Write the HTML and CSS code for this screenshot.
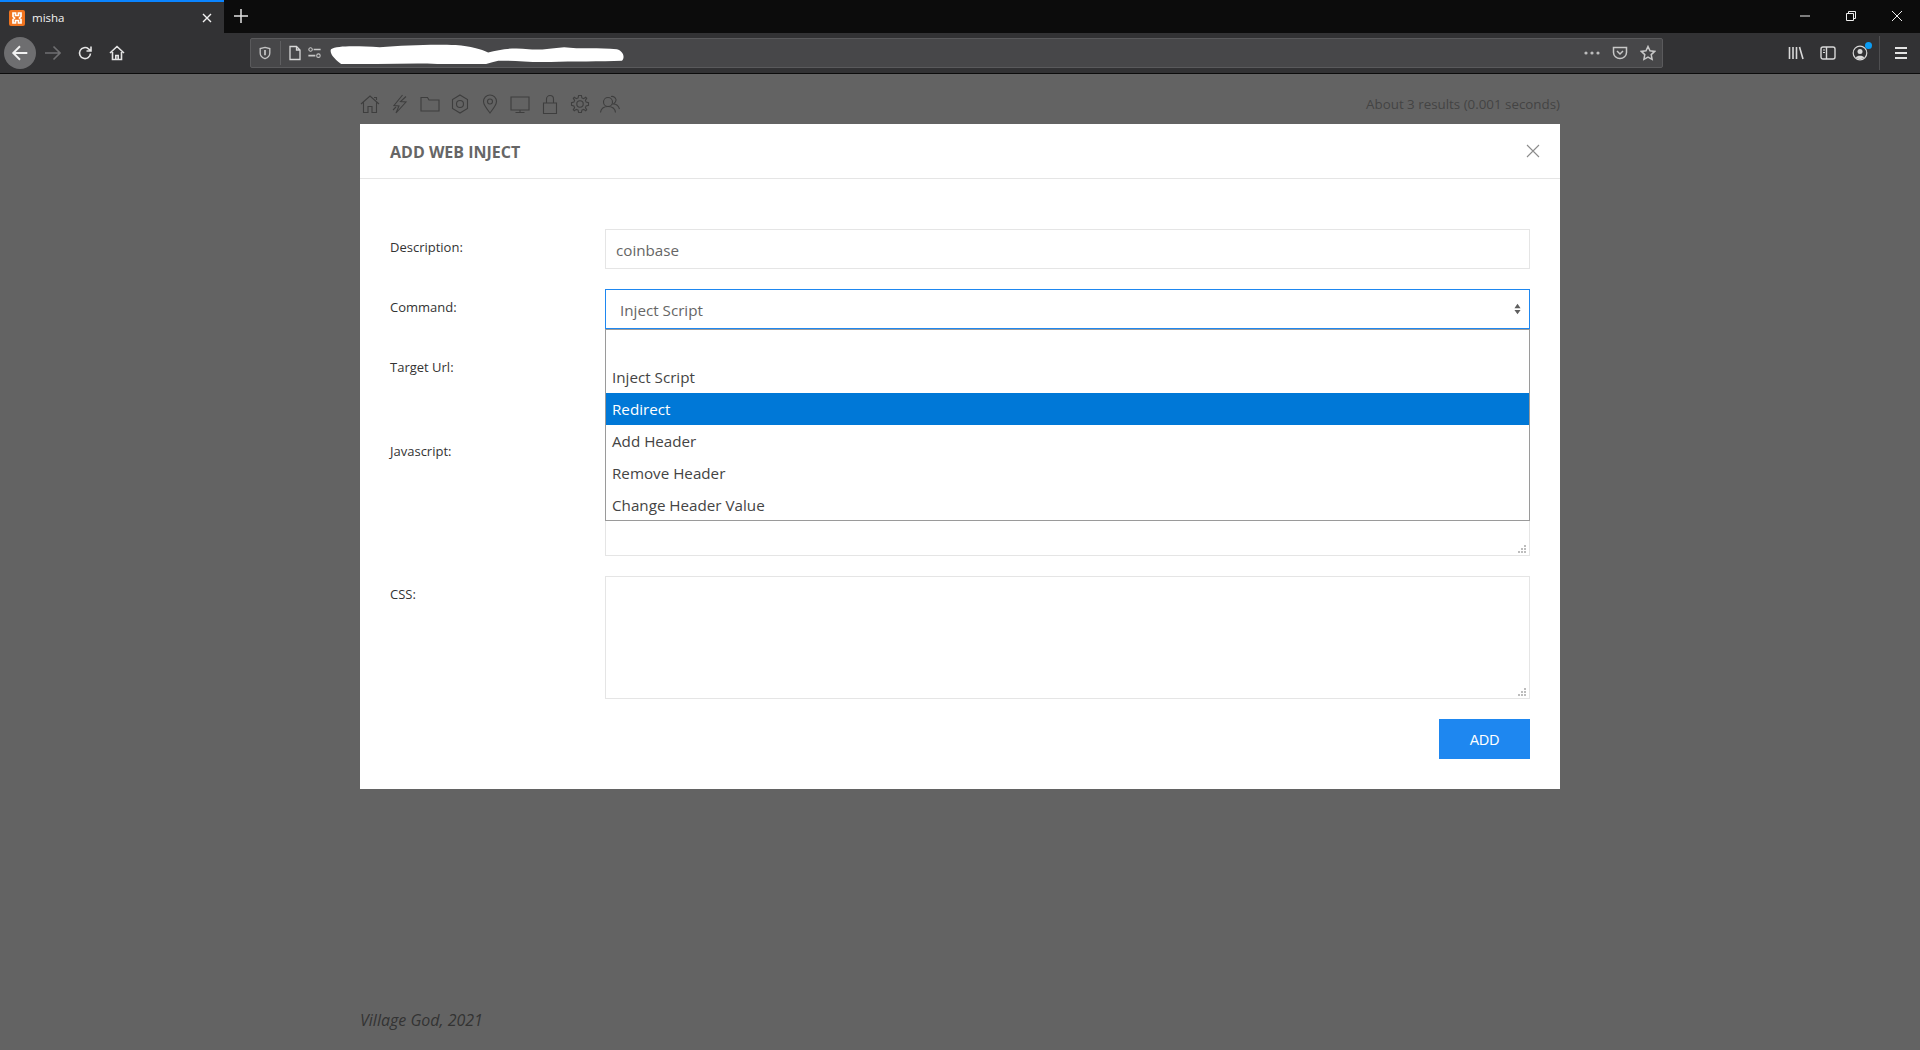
FILE: index.html
```html
<!DOCTYPE html>
<html lang="en">
<head>
<meta charset="utf-8">
<title>misha</title>
<link rel="stylesheet" href="styles.css">
</head>
<body>
<header class="chrome">
  <div class="tabstrip">
    <div class="tab">
      <svg class="favicon" viewBox="0 0 16 16"><rect width="16" height="16" rx="2" fill="#f0741f"/><path d="M4 3h2.500v2.500h3V3H12v3.500L10.500 8 12 9.500V13H9.500v-2.500h-3V13H4V9.500L5.500 8 4 6.500z" fill="none" stroke="#fff" stroke-width="1.700"/></svg>
      <span class="tab-title">misha</span>
      <svg class="tab-close" viewBox="0 0 10 10"><path d="M1 1l8 8M9 1l-8 8" stroke="#f2f2f2" stroke-width="1.400"/></svg>
    </div>
    <svg class="new-tab" viewBox="0 0 14 14"><path d="M7 0v14M0 7h14" stroke="#e2e2e2" stroke-width="1.500"/></svg>
    <div class="window-controls">
      <svg class="win" viewBox="0 0 12 12"><path d="M1 6h10" stroke="#eee" stroke-width="1"/></svg>
      <svg class="win" viewBox="0 0 12 12"><path d="M1.500 3.500h7v7h-7zM3.500 3.500v-2h7v7h-2" fill="none" stroke="#eee"/></svg>
      <svg class="win" viewBox="0 0 12 12"><path d="M1 1l10 10M11 1L1 11" stroke="#eee"/></svg>
    </div>
  </div>
  <div class="toolbar">
    <div class="back"><svg viewBox="0 0 16 16"><path d="M14.500 8H2M8 2L2 8l6 6" fill="none" stroke="#f2f2f2" stroke-width="1.700"/></svg></div>
    <svg class="tool tool-fwd" viewBox="0 0 16 16"><path d="M0 8h15M8.500 1.500L15 8l-6.500 6.500" fill="none" stroke="#6f6f71" stroke-width="1.600"/></svg>
    <svg class="tool" viewBox="0 0 16 16"><path d="M13.500 8.500a5.500 5.500 0 1 1-2-4.700L13.500 5.500M14 1.500v4.500H9.500" fill="none" stroke="#e4e4e4" stroke-width="1.600"/></svg>
    <svg class="tool" viewBox="0 0 16 16"><path d="M1 8l7-6.500L15 8M3.500 7v7.500h9V7M6.800 14.500v-4h2.400v4" fill="none" stroke="#e4e4e4" stroke-width="1.600"/></svg>
    <div class="urlbar">
      <svg class="url-shield" viewBox="0 0 16 16"><path d="M8 1.500l5.500 1.500v5c0 3-2.500 5.500-5.500 6.500-3-1-5.500-3.500-5.500-6.500V3z" fill="none" stroke="#c4c4c4" stroke-width="1.500"/><path d="M8 4.500v6" stroke="#c4c4c4" stroke-width="2"/></svg>
      <span class="url-sep"></span>
      <svg class="url-page" viewBox="0 0 16 16"><path d="M3 1.500h6.500L13 5v9.500H3zM9.500 1.500V5H13" fill="none" stroke="#d8d8d8" stroke-width="1.300"/></svg>
      <svg class="url-perm" viewBox="0 0 16 16"><circle cx="3.500" cy="4" r="2" fill="none" stroke="#c8c8c8" stroke-width="1.200"/><path d="M7 4h8M1 11h8" stroke="#c8c8c8" stroke-width="1.800"/><circle cx="12.500" cy="11" r="2" fill="none" stroke="#c8c8c8" stroke-width="1.200"/></svg>
      <svg class="scribble" viewBox="0 0 294 20" preserveAspectRatio="none"><path d="M2 6C8 2 30 3 50 4c25-2 55-3 75-2 15 1 25 4 32 7 12-3 25-5 40-3 12 1 22-1 35-2 15 2 35 0 52 2 7 2 8 8 5 11-20 1-50 0-70 1-20 1-40-2-52-1-10 2-20 6-32 7-12 0-18-3-28-4-20-1-40 0-60 0-15 0-25 2-35 0C6 16 0 10 2 6z" fill="#fff"/></svg>
      <span class="url-spacer"></span>
      <svg class="url-dots" viewBox="0 0 16 4"><circle cx="2" cy="2" r="1.600" fill="#bdbdbd"/><circle cx="8" cy="2" r="1.600" fill="#bdbdbd"/><circle cx="14" cy="2" r="1.600" fill="#bdbdbd"/></svg>
      <svg class="url-icon" viewBox="0 0 16 16"><path d="M1.500 2.500h13v5c0 3.500-3 6-6.500 6s-6.500-2.500-6.500-6z" fill="none" stroke="#c8c8c8" stroke-width="1.500"/><path d="M5 6l3 3 3-3" fill="none" stroke="#c8c8c8" stroke-width="1.500"/></svg>
      <svg class="url-icon" viewBox="0 0 16 16"><path d="M8 1.500l2 4.300 4.700.6-3.500 3.200.9 4.700L8 12l-4.100 2.300.9-4.700L1.300 6.400 6 5.800z" fill="none" stroke="#c8c8c8" stroke-width="1.500"/></svg>
    </div>
    <div class="tool-right">
      <svg class="tool" viewBox="0 0 16 16"><path d="M1.500 2v12M5 2v12M8.500 2v12M11.500 2l3.500 12" stroke="#d8d8d8" stroke-width="1.600" fill="none"/></svg>
      <svg class="tool" viewBox="0 0 16 16"><rect x="1" y="2" width="14" height="12" rx="2" fill="none" stroke="#d8d8d8" stroke-width="1.400"/><path d="M6.500 2v12" stroke="#d8d8d8" stroke-width="1.400"/><path d="M3 5h2M3 7.500h2" stroke="#d8d8d8"/></svg>
      <span class="account">
        <svg class="tool" viewBox="0 0 16 16"><circle cx="8" cy="8" r="6.800" fill="none" stroke="#d8d8d8" stroke-width="1.200"/><circle cx="8" cy="6.500" r="2.500" fill="#d8d8d8"/><path d="M3.800 12.500c1-2.500 7.400-2.500 8.400 0-2 2-6.400 2-8.400 0z" fill="#d8d8d8"/></svg>
        <span class="account-dot"></span>
      </span>
      <span class="tool-sep"></span>
      <svg class="tool" viewBox="0 0 16 16"><path d="M2 3h12M2 8h12M2 13h12" stroke="#e4e4e4" stroke-width="1.800"/></svg>
    </div>
  </div>
</header>

<main class="page">
  <div class="container">
    <div class="nav-row">
      <nav class="nav-icons">
        <svg viewBox="0 0 20 20"><path d="M1 10l9-8 9 8M3.500 8.500V18.500h4.500v-6h4v6h4.500V8.500M14 3.500h2.500V6" fill="none"/></svg>
        <svg viewBox="0 0 20 20"><path d="M12.500 1L4 11.500l5 .5L6 19l10-11-5.500-.5 5.500-5M3 16l3-3" fill="none"/></svg>
        <svg viewBox="0 0 20 20"><path d="M1 3.500h6.500l1.500 2.500h10v11H1z" fill="none"/></svg>
        <svg viewBox="0 0 20 20"><path d="M10 1l7.500 4.500v9L10 19l-7.500-4.500v-9z" fill="none"/><circle cx="10" cy="10" r="3.500" fill="none"/></svg>
        <svg viewBox="0 0 20 20"><path d="M10 19C6 14 3.500 10.500 3.500 7.500a6.500 6.500 0 0 1 13 0C16.500 10.500 14 14 10 19z" fill="none"/><circle cx="10" cy="7.500" r="2.500" fill="none"/></svg>
        <svg viewBox="0 0 20 20"><path d="M1 3h18v13H1zM10 16v2M5.500 18.500h9" fill="none"/></svg>
        <svg viewBox="0 0 20 20"><path d="M3.500 9h13v10.500h-13zM6.500 9V5a3.500 3.500 0 0 1 7 0v4" fill="none"/></svg>
        <svg viewBox="0 0 20 20"><circle cx="10" cy="10" r="3.200" fill="none"/><polygon points="8.600,1.500 11.400,1.500 11.900,3.900 13.600,4.600 15.700,3.300 16.700,4.300 15.400,6.400 16.100,8.100 18.500,8.600 18.500,11.400 16.100,11.900 15.400,13.600 16.700,15.700 15.700,16.700 13.600,15.400 11.900,16.100 11.400,18.500 8.600,18.500 8.100,16.100 6.400,15.400 4.300,16.700 3.300,15.700 4.600,13.600 3.900,11.900 1.500,11.400 1.500,8.600 3.900,8.100 4.600,6.400 3.300,4.300 4.300,3.300 6.400,4.600 8.100,3.900" fill="none"/></svg>
        <svg viewBox="0 0 20 20"><circle cx="8" cy="8" r="4.500" fill="none"/><path d="M.5 18.500c.5-4 3-6 7.500-6s7 2 7.500 6M11 2.500a4 4 0 0 1 5 3c.3 2-1 3.500-2.500 4.500 2.500 0 5 2 6 5" fill="none"/></svg>
      </nav>
      <span class="results">About 3 results (0.001 seconds)</span>
    </div>
    <footer class="credit">Village God, 2021</footer>
  </div>

  <section class="modal">
    <div class="modal-header">
      <h2 class="modal-title">ADD WEB INJECT</h2>
      <svg class="modal-close" viewBox="0 0 14 14"><path d="M1 1l12 12M13 1L1 13" stroke="#8c8c8c" stroke-width="1.100"/></svg>
    </div>
    <form class="modal-body">
      <div class="field">
        <label class="field-label">Description:</label>
        <input class="input" type="text" value="coinbase">
      </div>
      <div class="field">
        <label class="field-label">Command:</label>
        <div class="select-wrap">
          <div class="select">
            <span>Inject Script</span>
            <svg class="select-arrows" viewBox="0 0 8 12"><path d="M4 0l3.500 5H.5zM4 12L.5 7h7z" fill="#5f5f5f"/></svg>
          </div>
          <ul class="select-list">
            <li class="option option-edge"></li>
            <li class="option option-low">Inject Script</li>
            <li class="option option-low option-active">Redirect</li>
            <li class="option">Add Header</li>
            <li class="option">Remove Header</li>
            <li class="option option-edge">Change Header Value</li>
          </ul>
        </div>
      </div>
      <div class="field field-url">
        <label class="field-label">Target Url:</label>
        <input class="input" type="text">
      </div>
      <div class="field">
        <label class="field-label">Javascript:</label>
        <div class="textarea-wrap">
          <textarea class="textarea"></textarea>
          <svg class="grip" viewBox="0 0 8 8"><path d="M6 0h2v2H6zM3 3h2v2H3zM6 3h2v2H6zM0 6h2v2H0zM3 6h2v2H3zM6 6h2v2H6z" fill="#bdbdbd"/></svg>
        </div>
      </div>
      <div class="field">
        <label class="field-label">CSS:</label>
        <div class="textarea-wrap">
          <textarea class="textarea"></textarea>
          <svg class="grip" viewBox="0 0 8 8"><path d="M6 0h2v2H6zM3 3h2v2H3zM6 3h2v2H6zM0 6h2v2H0zM3 6h2v2H3zM6 6h2v2H6z" fill="#bdbdbd"/></svg>
        </div>
      </div>
      <div class="actions">
        <button class="button" type="button">ADD</button>
      </div>
    </form>
  </section>
</main>
</body>
</html>
```

FILE: styles.css
```css
* { box-sizing: border-box; }
html, body { height: 100%; }
body {
  margin: 0;
  display: flex;
  flex-direction: column;
  background: #636363;
  font-family: "Open Sans", "Noto Sans", sans-serif;
  overflow: hidden;
}
svg { display: block; flex: none; }

/* Browser chrome */
.chrome { flex: none; }
.tabstrip {
  height: 33px;
  background: #0c0c0c;
  display: flex;
  align-items: center;
}
.tab {
  width: 224px;
  height: 33px;
  background: #323234;
  border-top: 2px solid #0a84ff;
  display: flex;
  align-items: center;
  padding: 0 9px;
}
.favicon { width: 16px; height: 16px; }
.tab-title {
  margin-left: 7px;
  color: #f2f2f2;
  font-size: 11.5px;
  flex: 1;
}
.tab-close { width: 10px; height: 10px; margin-right: 3px; }
.new-tab { width: 14px; height: 14px; margin-left: 10px; margin-top: -2px; }
.window-controls {
  margin-left: auto;
  display: flex;
  gap: 34px;
  padding-right: 17px;
  margin-top: -2px;
}
.win { width: 12px; height: 12px; }

.toolbar {
  height: 41px;
  background: #323234;
  border-bottom: 1px solid #0c0c0c;
  display: flex;
  align-items: center;
  padding-left: 4px;
}
.back {
  width: 32px;
  height: 32px;
  border-radius: 50%;
  background: #6e6e70;
  display: flex;
  align-items: center;
  justify-content: center;
}
.back svg { width: 18px; height: 18px; }
.tool { width: 16px; height: 16px; }
.tool-fwd { margin-left: 9px; }
.toolbar > .tool + .tool { margin-left: 16px; }
.urlbar {
  width: 1413px;
  height: 30px;
  margin-left: 125px;
  background: #474749;
  border: 1px solid #5a5a5c;
  border-radius: 2px;
  display: flex;
  align-items: center;
  padding: 0 6px 0 7px;
}
.url-shield { width: 14px; height: 16px; }
.url-sep { width: 1px; height: 24px; background: #5f5f61; margin: 0 6px 0 8px; }
.url-page { width: 16px; height: 18px; }
.url-perm { width: 15px; height: 14px; margin-left: 4px; }
.scribble { width: 298px; height: 21px; margin-left: 7px; margin-top: 1px; }
.url-spacer { flex: 1; }
.url-dots { width: 16px; height: 4px; }
.url-icon { width: 16px; height: 16px; margin-left: 12px; }
.tool-right {
  flex: 1;
  display: flex;
  align-items: center;
  padding-left: 125px;
  gap: 16px;
}
.account { position: relative; }
.account-dot {
  position: absolute;
  top: -3px;
  right: -4px;
  width: 7px;
  height: 7px;
  border-radius: 50%;
  background: #0a9df5;
}
.tool-sep { width: 1px; height: 34px; background: #4e4e50; margin-left: -5px; margin-right: -3px; }

/* Page */
.page { flex: 1; position: relative; min-height: 0; }
.container {
  width: 1200px;
  height: 100%;
  margin: 0 auto;
  display: flex;
  flex-direction: column;
}
.nav-row {
  display: flex;
  align-items: center;
  justify-content: space-between;
  padding-top: 20px;
  height: 40px;
}
.nav-icons { display: flex; gap: 10px; }
.nav-icons svg {
  width: 20px;
  height: 20px;
  stroke: #3e3e3e;
  stroke-width: 1.100;
}
.results { color: #444; font-size: 13.35px; margin-top: -1px; }
.credit {
  margin-top: auto;
  padding-bottom: 20px;
  color: #333;
  font-size: 16px;
  line-height: 20px;
  font-style: italic;
}

/* Modal */
.modal {
  position: absolute;
  top: 50px;
  left: 360px;
  width: 1200px;
  height: 665px;
  background: #fff;
}
.modal-header {
  height: 55px;
  border-bottom: 1px solid #e5e5e5;
  display: flex;
  align-items: center;
  justify-content: space-between;
  padding: 2px 20px 0 30px;
}
.modal-title {
  margin: 0;
  font-size: 16px;
  font-weight: 700;
  color: #666;
}
.modal-close { width: 14px; height: 14px; margin-top: -2px; }
.modal-body {
  padding: 50px 30px 0;
  display: flex;
  flex-direction: column;
  gap: 20px;
}
.field { display: flex; align-items: flex-start; }
.field-url { padding-bottom: 24px; }
.field-label {
  width: 215px;
  flex: none;
  padding-top: 9px;
  color: #333;
  font-size: 13px;
  line-height: 18px;
}
.input, .textarea, .select {
  flex: 1;
  border: 1px solid #e5e5e5;
  background: #fff;
  color: #666;
  font-family: inherit;
  font-size: 15.2px;
  outline: none;
  border-radius: 0;
}
.input { height: 40px; padding: 2px 10px 0; }
.textarea-wrap { flex: 1; position: relative; }
.textarea {
  width: 100%;
  height: 123px;
  padding: 4px 10px;
  margin: 0;
  display: block;
  resize: none;
}
.grip {
  position: absolute;
  right: 4px;
  bottom: 3px;
  width: 8px;
  height: 8px;
}
.select-wrap { flex: 1; position: relative; }
.select {
  height: 40px;
  border-color: #1e87f0;
  display: flex;
  align-items: center;
  justify-content: space-between;
  padding: 2px 8px 0 14px;
}
.select-arrows { width: 7px; height: 12px; margin-top: -3px; }
.select-list {
  position: absolute;
  top: 40px;
  left: 0;
  right: 0;
  z-index: 2;
  margin: 0;
  padding: 0;
  list-style: none;
  background: #fff;
  border: 1px solid #9a9a9a;
}
.option {
  height: 32px;
  line-height: 32px;
  padding: 0 6px;
  color: #444;
  font-size: 15.2px;
}
.option-edge { height: 31px; }
.option-low { line-height: 33px; }
.option-active { background: #0078d7; color: #fff; }
.actions { display: flex; justify-content: flex-end; }
.button {
  width: 91px;
  height: 40px;
  padding: 2px 0 0;
  border: 0;
  background: #1e87f0;
  color: #fff;
  font-family: "Liberation Sans", sans-serif;
  font-size: 14px;
}
```
